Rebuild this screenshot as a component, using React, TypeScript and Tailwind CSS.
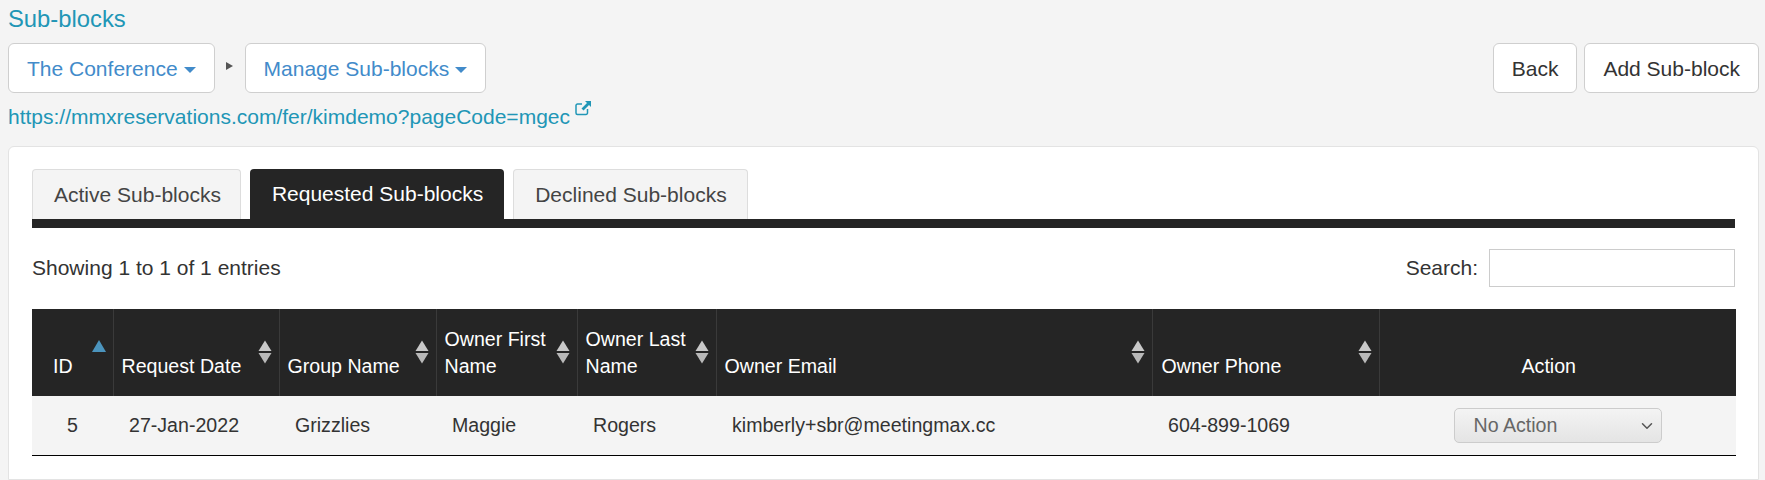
import React from 'react';
import { ChevronDown } from 'lucide-react';

const columns = [
  { label: 'ID', width: 81, sort: 'asc' },
  { label: 'Request Date', width: 166, sort: 'both' },
  { label: 'Group Name', width: 157, sort: 'both' },
  { label: 'Owner First Name', width: 141, sort: 'both' },
  { label: 'Owner Last Name', width: 139, sort: 'both' },
  { label: 'Owner Email', width: 436, sort: 'both' },
  { label: 'Owner Phone', width: 227, sort: 'both' },
  { label: 'Action', width: 357, sort: 'none' },
];

const row = ['5', '27-Jan-2022', 'Grizzlies', 'Maggie', 'Rogers', 'kimberly+sbr@meetingmax.cc', '604-899-1069'];

function SortIcon({ sort }: { sort: string }) {
  if (sort === 'none') return null;
  return (
    <svg width="14" height="24" viewBox="0 0 14 24" className="absolute right-[7px] top-[31px]">
      {sort === 'asc' ? (
        <path d="M0 12 L7 0 L14 12 Z" fill="#4b94bd" />
      ) : (
        <>
          <path d="M0.5 11 L7 0.5 L13.5 11 Z" fill="#c8c8c8" />
          <path d="M0.5 13 L13.5 13 L7 23.5 Z" fill="#b8b8b8" />
        </>
      )}
    </svg>
  );
}

function LinkIcon() {
  return (
    <svg width="17" height="16" viewBox="0 0 17 16" className="ml-[5px] mt-[-3px]" fill="none">
      <path d="M12.5 9 V13 a1.5 1.5 0 0 1 -1.5 1.5 H2.5 A1.5 1.5 0 0 1 1 13 V5.5 A1.5 1.5 0 0 1 2.5 4 H7" stroke="#2196b6" strokeWidth="1.5" />
      <path d="M10 1 H16 V7 L14 5 L8.5 10.5 L6.5 8.5 L12 3 Z" fill="#2196b6" />
    </svg>
  );
}

function NavButton({ label }: { label: string }) {
  return (
    <button className="flex h-[50px] items-center gap-[6px] rounded-[6px] border border-[#cfcfcf] bg-white px-[18px] pt-[1px] text-[21px] text-[#428bca]">
      {label}
      <span className="mt-[2px] border-x-[6px] border-t-[6px] border-x-transparent border-t-[#428bca]" />
    </button>
  );
}

function PlainButton({ label }: { label: string }) {
  return (
    <button className="h-[50px] rounded-[6px] border border-[#cfcfcf] bg-white px-[18px] pt-[1px] text-[21px] text-[#333]">
      {label}
    </button>
  );
}

export default function App() {
  return (
    <div className="flex h-[480px] flex-col overflow-hidden bg-[#f4f4f4] pl-[8px] pr-[6px] text-[21px] text-[#333] font-['Liberation_Sans',Arial,sans-serif]">
      <h2 className="pt-[4px] text-[23.8px] leading-[30px] text-[#2196b6]">Sub-blocks</h2>
      <div className="mt-[9px] flex items-center justify-between">
        <div className="flex items-center">
          <NavButton label="The Conference" />
          <span className="ml-[11px] mr-[12px] mb-[4px] border-y-[4px] border-l-[7px] border-y-transparent border-l-[#555]" />
          <NavButton label="Manage Sub-blocks" />
        </div>
        <div className="flex items-center gap-[7px]">
          <PlainButton label="Back" />
          <PlainButton label="Add Sub-block" />
        </div>
      </div>
      <div className="mt-[10px] flex items-start leading-[28px] text-[#2196b6]">
        <span>https://mmxreservations.com/fer/kimdemo?pageCode=mgec</span>
        <LinkIcon />
      </div>
      <div className="mt-[15px] flex-1 rounded-t-[6px] border border-[#e3e3e3] bg-white px-[23px] pt-[22px]">
        <div className="flex gap-[9px]">
          <div className="flex h-[50px] items-center rounded-t-[4px] border border-b-0 border-[#ddd] bg-[#f4f4f4] pl-[21px] pr-[19px] text-[#444]">Active Sub-blocks</div>
          <div className="flex h-[50px] items-center rounded-t-[4px] bg-[#252525] pl-[22px] pr-[21px] text-white">Requested Sub-blocks</div>
          <div className="flex h-[50px] items-center rounded-t-[4px] border border-b-0 border-[#ddd] bg-[#f4f4f4] pl-[21px] pr-[20px] text-[#444]">Declined Sub-blocks</div>
        </div>
        <div className="h-[9px] bg-[#252525]" />
        <div className="mt-[21px] flex items-center justify-between">
          <span>Showing 1 to 1 of 1 entries</span>
          <label className="flex items-center gap-[11px]">
            Search:
            <input className="h-[38px] w-[246px] border border-[#ccc] bg-white" />
          </label>
        </div>
        <table className="mt-[22px] w-full table-fixed border-collapse">
          <thead>
            <tr className="h-[87px] bg-[#252525] text-white">
              {columns.map((c) => (
                <th
                  key={c.label}
                  style={{ width: c.width }}
                  className={`relative border-r border-[#3a3a3a] px-[8px] pb-[16px] align-bottom text-[19.6px] leading-[27px] font-normal last:border-r-0 ${c.label === 'Action' ? 'pr-[26px] text-center' : 'text-left'} ${c.label === 'ID' ? 'pl-[21px]' : ''} ${c.label === 'Owner Phone' ? 'pl-[9px]' : ''}`}
                >
                  {c.label}
                  <SortIcon sort={c.sort} />
                </th>
              ))}
            </tr>
          </thead>
          <tbody>
            <tr className="h-[59px] border-b border-black bg-[#f4f4f4]">
              {row.map((v, i) => (
                <td key={i} className={`px-[16px] text-[19.6px] ${i === 0 ? 'text-center' : ''}`}>{v}</td>
              ))}
              <td className="text-center">
                <div className="relative mx-auto h-[35px] w-[208px]">
                  <select className="h-full w-full appearance-none rounded-[5px] border border-[#ccc] bg-gradient-to-b from-[#f4f4f4] to-[#e4e4e4] px-[19px] text-[19.6px] text-[#666]">
                    <option>No Action</option>
                  </select>
                  <ChevronDown size={18} strokeWidth={2} className="pointer-events-none absolute right-[6px] top-[9px] text-[#555]" />
                </div>
              </td>
            </tr>
          </tbody>
        </table>
      </div>
    </div>
  );
}
